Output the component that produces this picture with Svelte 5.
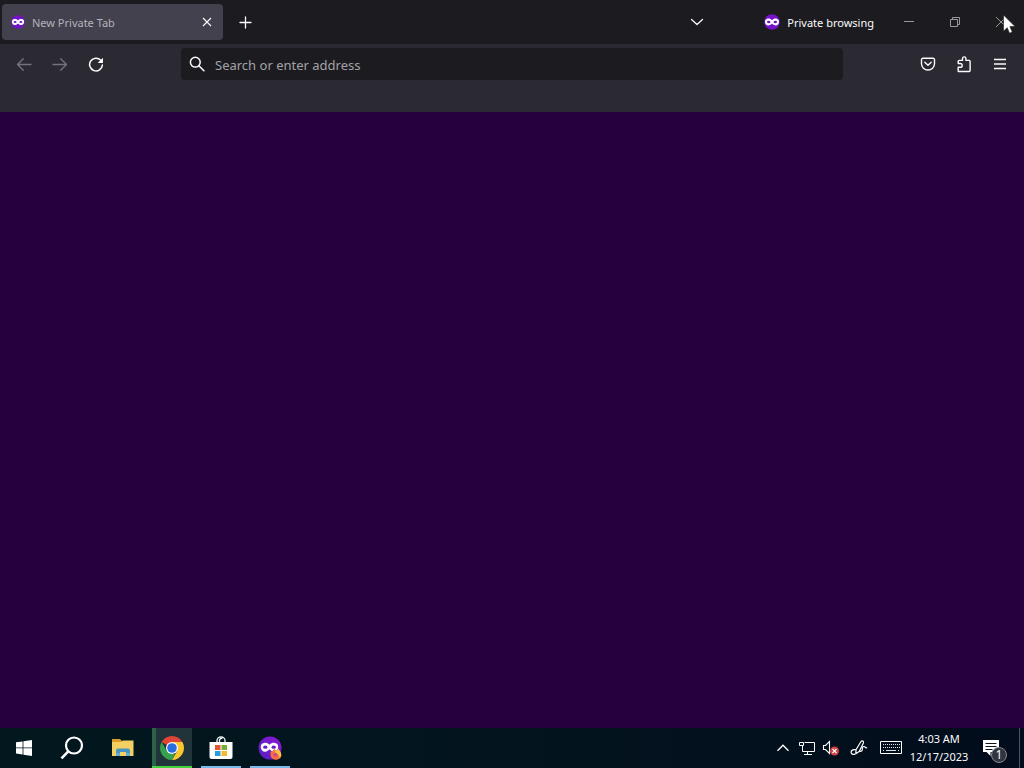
<script>
  let address = $state('');
</script>

{#snippet mask(size)}
  <svg width={size} height={size} viewBox="0 0 16 16" aria-hidden="true">
    <circle cx="8" cy="8" r="7.8" fill="#7412c8" />
    <path
      d="M8 6.200C6.800 4.700 5.300 4.300 3.800 4.500 1.800 4.800.8 6.200 1 8c.2 2.200 1.600 3.500 3.500 3.400C6 11.300 7.200 10.600 8 9.600c.8 1 2 1.700 3.500 1.800 1.900.1 3.300-1.200 3.500-3.400.2-1.800-.8-3.200-2.800-3.500C10.700 4.300 9.200 4.700 8 6.200Z"
      fill="#fff" />
    <ellipse cx="4.700" cy="8" rx="1.700" ry="1.200" fill="#6a13b8" />
    <ellipse cx="11.300" cy="8" rx="1.700" ry="1.200" fill="#6a13b8" />
  </svg>
{/snippet}

<div class="desktop">
  <header class="titlebar">
    <div class="tab">
      {@render mask(14)}
      <span class="tab-title">New Private Tab</span>
      <button class="tab-close" aria-label="Close tab">
        <svg width="10" height="10" viewBox="0 0 10 10"><path d="M1 1l8 8M9 1L1 9" stroke="#fbfbfe" stroke-width="1.100" /></svg>
      </button>
    </div>
    <button class="new-tab" aria-label="New tab">
      <svg width="13" height="13" viewBox="0 0 13 13"><path d="M6.500 1v11M1 6.500h11" stroke="#fbfbfe" stroke-width="1.300" stroke-linecap="round" /></svg>
    </button>
    <div class="grow"></div>
    <button class="all-tabs" aria-label="List all tabs">
      <svg width="14" height="14" viewBox="0 0 14 14"><path d="M1.500 4.500L7 9.500l5.500-5" fill="none" stroke="#fbfbfe" stroke-width="1.300" stroke-linecap="round" stroke-linejoin="round" /></svg>
    </button>
    <div class="private">
      {@render mask(16)}
      <span class="private-label">Private browsing</span>
    </div>
    <button class="caption" aria-label="Minimize">
      <svg width="10" height="10" viewBox="0 0 10 10"><path d="M0 4.500h10" stroke="#97979c" /></svg>
    </button>
    <button class="caption" aria-label="Restore">
      <svg width="10" height="10" viewBox="0 0 10 10"><path d="M.5 2.500h7v7h-7zM2.500 2.500v-2h7v7h-2" fill="none" stroke="#97979c" /></svg>
    </button>
    <button class="caption" aria-label="Close window">
      <svg width="10" height="10" viewBox="0 0 10 10"><path d="M0 0l10 10M10 0L0 10" stroke="#97979c" /></svg>
    </button>
  </header>

  <nav class="toolbar" aria-label="Navigation">
    <button class="tool" aria-label="Back">
      <svg width="16" height="16" viewBox="0 0 16 16"><path d="M15 8.500H1.500M7.300 2.700L1.500 8.500l5.800 5.800" fill="none" stroke="#75747e" stroke-width="1.300" stroke-linecap="round" stroke-linejoin="round" /></svg>
    </button>
    <button class="tool" aria-label="Forward">
      <svg width="16" height="16" viewBox="0 0 16 16"><path d="M1 8.500h13.500M8.700 2.700L14.500 8.500l-5.800 5.800" fill="none" stroke="#75747e" stroke-width="1.300" stroke-linecap="round" stroke-linejoin="round" /></svg>
    </button>
    <button class="tool" aria-label="Reload">
      <svg width="16" height="16" viewBox="0 0 16 16">
        <path d="M12.800 4.300A6.400 6.400 0 1 0 14.400 9" fill="none" stroke="#fbfbfe" stroke-width="1.500" stroke-linecap="round" />
        <path d="M15 1.800v4.800a.5.5 0 0 1-.5.5H9.700z" fill="#fbfbfe" />
      </svg>
    </button>
    <div class="spring"></div>
    <label class="urlbar">
      <svg width="16" height="16" viewBox="0 0 16 16"><circle cx="6.300" cy="6.200" r="4.900" fill="none" stroke="#fbfbfe" stroke-width="1.500" /><path d="M9.900 9.800l5 4.900" stroke="#fbfbfe" stroke-width="1.600" stroke-linecap="round" /></svg>
      <input type="text" placeholder="Search or enter address" aria-label="Search or enter address" bind:value={address} />
    </label>
    <div class="spring"></div>
    <button class="tool" aria-label="Save to Pocket">
      <svg width="16" height="16" viewBox="0 0 16 16" fill="none" stroke="#fbfbfe" stroke-width="1.400" stroke-linecap="round" stroke-linejoin="round"><path d="M2.900 2.300h10.200a1.400 1.400 0 0 1 1.400 1.400v4a6.500 6.300 0 0 1-13 0v-4a1.400 1.400 0 0 1 1.400-1.400z" /><path d="M4.800 6.300L8 9.300l3.200-3" /></svg>
    </button>
    <button class="tool" aria-label="Extensions">
      <svg width="16" height="18" viewBox="0 0 16 18" fill="none" stroke="#fbfbfe" stroke-width="1.400" stroke-linejoin="round"><path d="M2.700 16.500h10.400a1 1 0 0 0 1-1V6.400a1 1 0 0 0-1-1H9.900V3.600a1.700 1.700 0 0 0-3.400 0v1.800H3.200a1 1 0 0 0-1 1v2.100h2.100a1.900 1.900 0 0 1 0 3.800H2.200v3.600a.6.600 0 0 0 .5.600z" /></svg>
    </button>
    <button class="tool" aria-label="Open application menu">
      <svg width="14" height="14" viewBox="0 0 14 14"><path d="M1 2.500h12M1 7h12M1 11.500h12" stroke="#fbfbfe" stroke-width="1.300" /></svg>
    </button>
  </nav>
  <div class="bookmarks"></div>

  <main></main>

  <footer class="taskbar">
    <button class="system" aria-label="Start">
      <svg width="16" height="16" viewBox="0 0 16 16" fill="#fff"><path d="M0 2.300L6.600 1.400v6.100H0zM7.400 1.300L16 0v7.500H7.400zM0 8.300h6.600v6.200L0 13.600zM7.400 8.300H16V16l-8.600-1.300z" /></svg>
    </button>
    <button class="system" aria-label="Search">
      <svg width="24" height="24" viewBox="0 0 24 24"><circle cx="14" cy="9.500" r="8" fill="none" stroke="#fff" stroke-width="2.200" /><path d="M8.300 15.400L1.500 22.400" stroke="#fff" stroke-width="2.600" /></svg>
    </button>
    <div class="apps">
      <button class="app" aria-label="File Explorer">
        <svg width="24" height="20" viewBox="0 0 24 20"><path d="M1 1h8l2 2h11v3H1z" fill="#dc9c29" /><path d="M1 4h9l2-1.500h10.500V18H1z" fill="#f4cf62" /><path d="M5 18v-5.500a2 2 0 0 1 2-2h10a2 2 0 0 1 2 2V18h-4v-4H9v4z" fill="#4894c2" /><path d="M5 15h4v3H5zM15 15h4v3h-4z" fill="#65acd3" /></svg>
      </button>
      <button class="app active" aria-label="Google Chrome">
        <svg width="24" height="24" viewBox="0 0 24 24">
          <path d="M12 12L1.610 6A12 12 0 0 1 22.390 6z" fill="#e04437" />
          <path d="M12 6h10.390A12 12 0 0 1 12 24l5.200-9z" fill="#fbc72f" />
          <path d="M1.610 6l5.190 9L12 18l3 .1L12 24A12 12 0 0 1 1.610 6z" fill="#36a04c" />
          <circle cx="12" cy="12" r="6" fill="#fff" /><circle cx="12" cy="12" r="4.800" fill="#286ee0" />
        </svg>
      </button>
      <button class="app open" aria-label="Microsoft Store">
        <svg width="24" height="24" viewBox="0 0 24 24">
          <path d="M8 8V4.500a4 3.700 0 0 1 8 0V8M10.500 6V4a3 2.500 0 0 1 3-2" fill="none" stroke="#f5f7f8" stroke-width="1.300" />
          <path d="M.5 6h23v15a2 2 0 0 1-2 2h-19a2 2 0 0 1-2-2z" fill="#fff" />
          <path d="M6 9h5.500v5H6z" fill="#e25738" /><path d="M12.500 9H18v5h-5.500z" fill="#78ae35" /><path d="M6 15h5.500v5H6z" fill="#26a0dc" /><path d="M12.500 15H18v5h-5.500z" fill="#f4b930" />
        </svg>
      </button>
      <button class="app open" aria-label="Firefox Private Browsing">
        <svg width="24" height="24" viewBox="0 0 24 24">
          <defs><linearGradient id="orb" x1="0" y1="1" x2="1" y2="0"><stop offset="0" stop-color="#5520bd" /><stop offset="1" stop-color="#8b17d5" /></linearGradient></defs>
          <circle cx="12" cy="12" r="11.500" fill="url(#orb)" />
          <path d="M11.500 8.800C9.800 6.900 7.800 6.600 6 6.900c-2.400.4-3.500 2.200-3.200 4.500.4 2.700 2.100 4.500 4.500 4.300 1.800-.1 3.200-1.200 4.200-2.400 1 1.200 2.400 2.300 4.200 2.400 2.400.2 4.100-1.600 4.500-4.300.3-2.300-.8-4.100-3.200-4.500-1.800-.3-3.800 0-5.500 1.900z" fill="#fff" />
          <ellipse cx="7.300" cy="11.200" rx="2.100" ry="1.600" fill="#681bc8" /><ellipse cx="15.700" cy="11.200" rx="2.100" ry="1.600" fill="#681bc8" />
          <path d="M12.500 15.500c.8.200 1.400-.1 2.200-.3.300-1.200 1.200-2 2.200-2.400.1 1 .8 1.500 1.900 1.900l1.700-2c.4 1.500 2.300 2.700 2.700 5.200.5 3.200-2 5.800-5.200 5.800-3.400 0-5.800-2.700-5.500-5.800.1-.9-.2-1.600 0-2.400z" fill="#f86d44" />
          <path d="M17 13c.2 1 .8 1.500 1.900 1.800l1.600-2c.5 1.500 2.300 2.700 2.700 5.200.3 2-.6 3.700-1.900 4.700.5-2.700-.8-4.500-2.800-5-1.700-.4-2.200-2.700-1.500-4.700z" fill="#fdbd45" />
          <circle cx="17.400" cy="18.800" r="2" fill="#c94a8e" />
        </svg>
      </button>
    </div>
    <div class="grow"></div>
    <div class="tray">
      <button class="tray-item" aria-label="Show hidden icons"><svg width="14" height="10" viewBox="0 0 14 10"><path d="M1.500 7.700L7 2.200l5.500 5.500" fill="none" stroke="#fff" stroke-width="1.300" /></svg></button>
      <button class="tray-item" aria-label="Network"><svg width="18" height="16" viewBox="0 0 18 16" fill="none" stroke="#fff"><path d="M6.500 2.500h10v9h-12V6M9.500 11.500v3M6 14.500h8" /><path d="M1.500 2.500h4v3h-4zM4.500 5.500V7" /></svg></button>
      <button class="tray-item" aria-label="Volume muted"><svg width="18" height="16" viewBox="0 0 18 16"><path d="M1.500 5.500h2l4-4v12l-4-4h-2z" fill="none" stroke="#fff" stroke-width="1.100" /><circle cx="12.500" cy="11" r="4.500" fill="#cf4243" /><path d="M10.500 9l4 4M14.500 9l-4 4" stroke="#fff" stroke-width="1.100" /></svg></button>
      <button class="tray-item pen" aria-label="Windows Ink"><svg width="18" height="18" viewBox="0 0 18 18" fill="none" stroke="#fff" stroke-width="1.200" stroke-linecap="round" stroke-linejoin="round"><path d="M5.800 14.800l.2-4L11 2.500c1-1.300 3.100-.2 2.400 1.500L9.200 12.500z" /><path d="M5.300 10.700c-2.500-.4-4.200.7-4.200 2.500 0 1.900 2 2.600 3.700 1.900M9.700 12.300c1.600.3 2.700-.4 2.600-2-.1-1.700.3-2.900 1.700-2.800 1.200.1 1.400 1.600 2.700 1.300" /></svg></button>
      <button class="tray-item keyboard" aria-label="Touch keyboard"><svg width="24" height="14" viewBox="0 0 24 14" fill="none" stroke="#fff"><path d="M1.500.5h21v12h-21z" /><path d="M4 3.500h17M4 6.500h17" stroke-dasharray="1 1" stroke="#dfe3e6" /><path d="M4 9.500h1M7 9.500h10M19 9.500h1" stroke="#dfe3e6" /></svg></button>
      <time class="clock" datetime="2023-12-17T04:03"><span>4:03 AM</span><span>12/17/2023</span></time>
      <button class="notes" aria-label="1 new notification">
        <svg width="18" height="18" viewBox="0 0 18 18"><path d="M1 1h16v12H8.500v4l-4-4H1z" fill="#fff" /><path d="M3.500 4.500h11M3.500 7.500h11M3.500 10.500h7" stroke="#07151f" /></svg>
        <span class="badge">1</span>
      </button>
      <button class="peek" aria-label="Show desktop"></button>
    </div>
  </footer>

  <svg class="cursor" width="14" height="20" viewBox="0 0 14 20" aria-hidden="true"><path d="M.5 1v16.200l3.700-3.500 2.300 5.500 2.800-1.200-2.400-5.400h5.200z" fill="#fff" stroke="#151417" stroke-width=".6" /></svg>
</div>

<style>
  :global(body) {
    margin: 0;
    background: #25003e;
  }
  .desktop {
    position: relative;
    display: flex;
    flex-direction: column;
    min-height: 100vh;
    font-family: "Noto Sans", "Open Sans", sans-serif;
    font-size: 12px;
    line-height: 16px;
    color: #fbfbfe;
    overflow: hidden;
  }
  button {
    display: flex;
    align-items: center;
    justify-content: center;
    flex: none;
    padding: 0;
    border: 0;
    background: none;
    color: inherit;
    font: inherit;
  }
  svg {
    display: block;
    flex: none;
  }
  .grow {
    flex: 1;
  }
  .titlebar {
    display: flex;
    align-items: center;
    height: 44px;
    padding-left: 2px;
    background: #1c1b20;
  }
  .tab {
    display: flex;
    align-items: center;
    gap: 7px;
    box-sizing: border-box;
    width: 221px;
    height: 36px;
    padding: 0 6px 0 9px;
    border-radius: 4px;
    background: #42414d;
    font-size: 11px;
    color: #b4b3ba;
  }
  .tab-title,
  .private-label {
    padding-top: 2px;
    white-space: nowrap;
  }
  .tab-title {
    flex: 1;
  }
  .tab-close {
    width: 20px;
    height: 20px;
  }
  .new-tab {
    width: 36px;
    height: 36px;
    margin-left: 4px;
  }
  .all-tabs {
    width: 36px;
    height: 36px;
    margin-right: 49px;
  }
  .private {
    display: flex;
    align-items: center;
    gap: 7px;
    margin-right: 12px;
    font-size: 11px;
  }
  .caption {
    width: 46px;
    height: 44px;
  }
  .toolbar {
    display: flex;
    align-items: center;
    height: 40px;
    padding: 0 6px;
    background: #2b2a33;
  }
  .tool {
    width: 36px;
    height: 36px;
  }
  .spring {
    flex: none;
    width: 67px;
  }
  .urlbar {
    display: flex;
    align-items: center;
    gap: 10px;
    flex: 1;
    min-width: 0;
    height: 32px;
    box-sizing: border-box;
    padding: 0 8px;
    border-radius: 4px;
    background: #1c1b20;
  }
  .urlbar input {
    flex: 1;
    min-width: 0;
    padding: 2px 0 0;
    border: 0;
    outline: 0;
    background: none;
    color: #fbfbfe;
    font: 13px/20px "Noto Sans", "Open Sans", sans-serif;
  }
  .urlbar input::placeholder {
    color: #a3a2a8;
    opacity: 1;
  }
  .bookmarks {
    height: 28px;
    background: #2b2a33;
  }
  main {
    flex: 1;
    background: #25003e;
  }
  .taskbar {
    display: flex;
    height: 40px;
    background: linear-gradient(90deg, #02171e, #03141e 50%, #020c1c);
  }
  .system {
    width: 48px;
  }
  .apps {
    display: flex;
    gap: 9px;
    margin-left: 7px;
  }
  .app {
    box-sizing: border-box;
    width: 40px;
    border-top: 2px solid transparent;
    border-bottom: 2px solid transparent;
  }
  .open {
    border-bottom-color: #76b9ed;
  }
  .active {
    border-bottom-color: #45d13d;
    background: linear-gradient(90deg, #2c6248 4px, #20343a 4px);
    background-origin: border-box;
  }
  .tray {
    display: flex;
  }
  .tray-item {
    width: 24px;
  }
  .pen,
  .keyboard {
    width: 32px;
  }
  .clock {
    display: flex;
    flex-direction: column;
    align-items: center;
    justify-content: center;
    width: 64px;
    font-size: 11px;
    line-height: 18px;
    white-space: nowrap;
  }
  .notes {
    position: relative;
    width: 48px;
    padding-right: 8px;
  }
  .badge {
    position: absolute;
    right: 12px;
    bottom: 5px;
    box-sizing: border-box;
    width: 16px;
    height: 16px;
    border: 1px solid #85898e;
    border-radius: 50%;
    background: #30363d;
    font-size: 12px;
    line-height: 14px;
    text-align: center;
  }
  .peek {
    width: 5px;
    border-left: 1px solid #4d565f;
  }
  .cursor {
    position: absolute;
    top: 14px;
    right: 7px;
  }
</style>
